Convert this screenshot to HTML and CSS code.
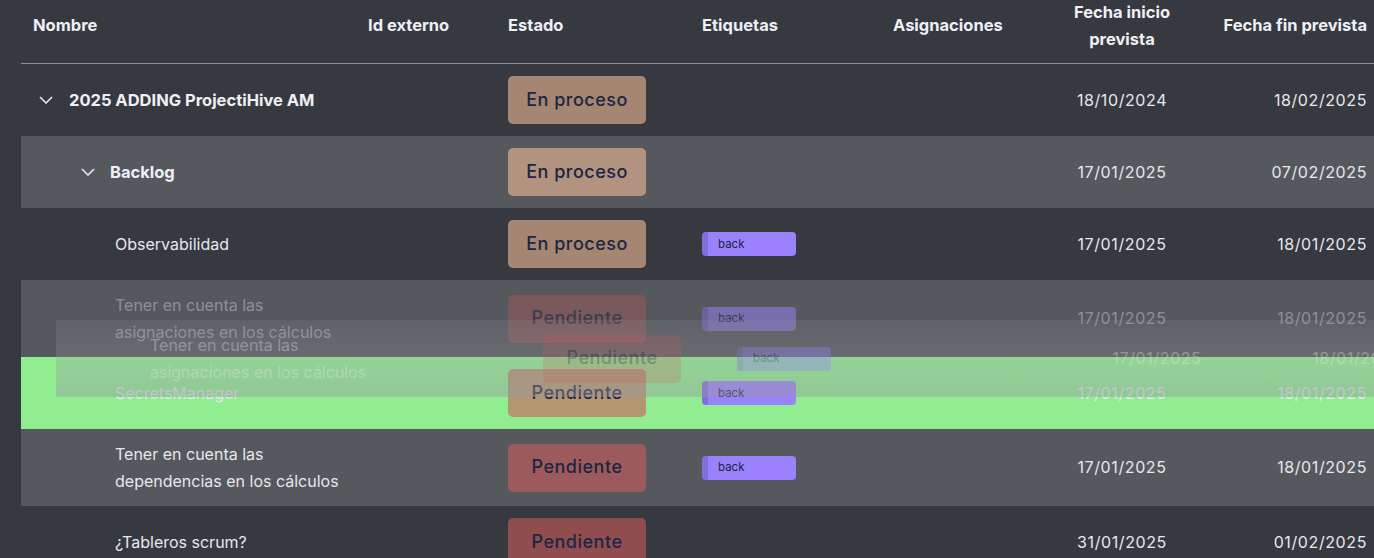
FILE: index.html
```html
<!DOCTYPE html>
<html lang="es">
<head>
<meta charset="utf-8">
<title>Tabla</title>
<link rel="stylesheet" href="styles.css">
</head>
<body>
<div class="table">
  <div class="row head">
    <div class="cell name-h">Nombre</div>
    <div class="cell">Id externo</div>
    <div class="cell">Estado</div>
    <div class="cell">Etiquetas</div>
    <div class="cell">Asignaciones</div>
    <div class="cell c-start">Fecha inicio prevista</div>
    <div class="cell c-end">Fecha fin prevista</div>
  </div>

  <div class="row">
    <div class="cell name lvl0"><svg class="chev" viewBox="0 0 14 8"><path d="M1 1 L7 7 L13 1"/></svg><span class="bold">2025 ADDING ProjectiHive AM</span></div>
    <div class="cell"></div>
    <div class="cell"><span class="badge proc">En proceso</span></div>
    <div class="cell"></div>
    <div class="cell"></div>
    <div class="cell c-start date">18/10/2024</div>
    <div class="cell c-end date">18/02/2025</div>
  </div>

  <div class="row alt">
    <div class="cell name lvl1"><svg class="chev" viewBox="0 0 14 8"><path d="M1 1 L7 7 L13 1"/></svg><span class="bold">Backlog</span></div>
    <div class="cell"></div>
    <div class="cell"><span class="badge proc">En proceso</span></div>
    <div class="cell"></div>
    <div class="cell"></div>
    <div class="cell c-start date">17/01/2025</div>
    <div class="cell c-end date">07/02/2025</div>
  </div>

  <div class="row">
    <div class="cell name lvl2">Observabilidad</div>
    <div class="cell"></div>
    <div class="cell"><span class="badge proc">En proceso</span></div>
    <div class="cell"><span class="tag">back</span></div>
    <div class="cell"></div>
    <div class="cell c-start date">17/01/2025</div>
    <div class="cell c-end date">18/01/2025</div>
  </div>

  <div class="row alt dragging">
    <div class="cell name lvl2">Tener en cuenta las<br>asignaciones en los cálculos</div>
    <div class="cell"></div>
    <div class="cell"><span class="badge pend">Pendiente</span></div>
    <div class="cell"><span class="tag">back</span></div>
    <div class="cell"></div>
    <div class="cell c-start date">17/01/2025</div>
    <div class="cell c-end date">18/01/2025</div>
  </div>

  <div class="row drop">
    <div class="cell name lvl2">SecretsManager</div>
    <div class="cell"></div>
    <div class="cell"><span class="badge pend">Pendiente</span></div>
    <div class="cell"><span class="tag">back</span></div>
    <div class="cell"></div>
    <div class="cell c-start date">17/01/2025</div>
    <div class="cell c-end date">18/01/2025</div>
  </div>

  <div class="row alt">
    <div class="cell name lvl2">Tener en cuenta las<br>dependencias en los cálculos</div>
    <div class="cell"></div>
    <div class="cell"><span class="badge pend">Pendiente</span></div>
    <div class="cell"><span class="tag">back</span></div>
    <div class="cell"></div>
    <div class="cell c-start date">17/01/2025</div>
    <div class="cell c-end date">18/01/2025</div>
  </div>

  <div class="row">
    <div class="cell name lvl2">¿Tableros scrum?</div>
    <div class="cell"></div>
    <div class="cell"><span class="badge pend">Pendiente</span></div>
    <div class="cell"></div>
    <div class="cell"></div>
    <div class="cell c-start date">31/01/2025</div>
    <div class="cell c-end date">01/02/2025</div>
  </div>
</div>

<div class="row ghost">
  <div class="cell name lvl2">Tener en cuenta las<br>asignaciones en los cálculos</div>
  <div class="cell"></div>
  <div class="cell"><span class="badge pend">Pendiente</span></div>
  <div class="cell"><span class="tag">back</span></div>
  <div class="cell"></div>
  <div class="cell c-start date">17/01/2025</div>
  <div class="cell c-end date">18/01/2025</div>
</div>
</body>
</html>
```

FILE: styles.css
```css
html, body {
  margin: 0;
  padding: 0;
  height: 100%;
  overflow: hidden;
  background: #363940;
}

body {
  position: relative;
  font-family: Inter, "Noto Sans", sans-serif;
  font-size: 16px;
  color: #e6e8ee;
}

.table {
  margin-left: 21px;
  width: 1358px;
}

.row {
  display: grid;
  grid-template-columns: 335px 140px 194px 191px 155px 172px 171px;
  align-items: center;
  width: 1358px;
}

.cell {
  padding: 12px 12px;
  line-height: 26.5px;
  min-height: 48px;
  box-sizing: content-box;
  display: flex;
  align-items: center;
}

.head {
  height: 51px;
  padding-bottom: 12px;
  border-bottom: 1px solid #8e9095;
  font-weight: 700;
  font-size: 16.5px;
  color: #eef0f6;
}

.head .cell {
  padding: 0 12px;
  min-height: 0;
  line-height: 27px;
}

.head .c-end {
  padding-left: 0;
}

.c-start {
  justify-content: center;
  text-align: center;
}

.c-end {
  justify-content: flex-end;
  text-align: right;
  padding-left: 0;
}

.date {
  letter-spacing: 0.6px;
}

.alt {
  background: #55585d;
}

.drop {
  background: #90ee90;
}

.name {
  display: flex;
  align-items: center;
}

.lvl0 { padding-left: 18px; }
.lvl1 { padding-left: 60px; }
.lvl2 { padding-left: 94px; }

.chev {
  width: 14px;
  height: 8px;
  margin-right: 16px;
  flex: none;
}

.lvl1 .chev { margin-right: 15px; }

.chev path {
  fill: none;
  stroke: #e6e8ee;
  stroke-width: 1.6;
}

.bold {
  font-weight: 700;
  font-size: 16.5px;
  color: #eef0f6;
}

.badge {
  display: inline-flex;
  align-items: center;
  justify-content: center;
  width: 138px;
  height: 48px;
  border-radius: 5px;
  font-size: 18px;
  font-weight: 500;
  letter-spacing: 0.5px;
  color: #1c2541;
}

.badge.proc { background: rgba(240, 186, 150, 0.6); }
.badge.pend { background: rgba(205, 92, 92, 0.6); }

.tag {
  display: inline-flex;
  align-items: center;
  width: 94px;
  height: 24px;
  box-sizing: border-box;
  padding-left: 10px;
  border-radius: 4px;
  background: #9b82fc;
  border-left: 6px solid #7f70dc;
  font-size: 11.5px;
  color: #1c2541;
}

.dragging .cell {
  color: rgba(230, 232, 238, 0.4);
}

.dragging .badge,
.dragging .tag {
  opacity: 0.5;
}

.ghost {
  position: absolute;
  left: 56px;
  top: 320px;
  height: 77px;
  background: linear-gradient(to bottom, rgba(150, 152, 158, 0.15), rgba(150, 152, 158, 0.45));
}

.ghost .cell {
  opacity: 0.35;
}
```
